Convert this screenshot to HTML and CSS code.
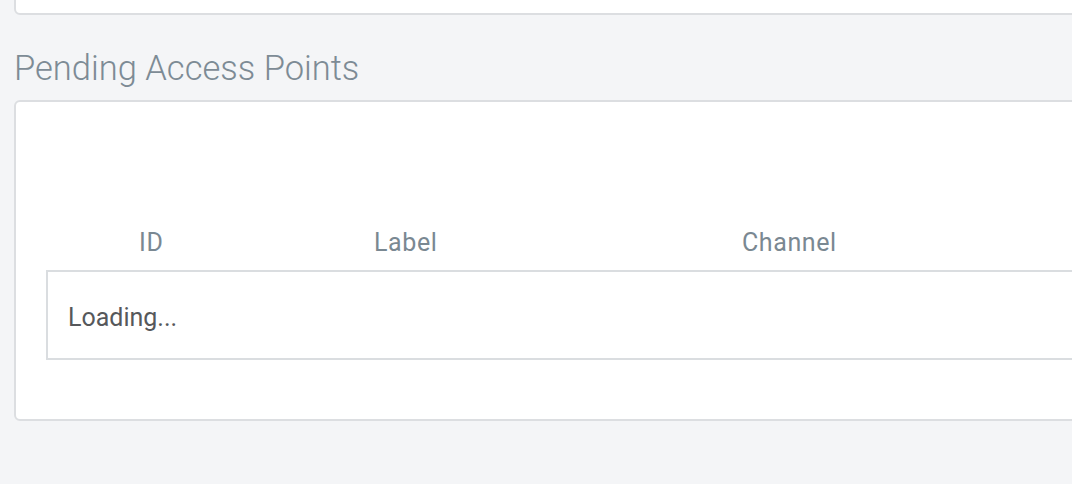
FILE: index.html
```html
<!DOCTYPE html>
<html>
<head>
<meta charset="utf-8">
<link rel="stylesheet" href="styles.css">
</head>
<body>
<div class="page">
  <div class="card card-top"></div>
  <h2 class="section-title">Pending Access Points</h2>
  <div class="card card-main">
    <div class="table-head">
      <div class="col col-id">ID</div>
      <div class="col col-label">Label</div>
      <div class="col col-channel">Channel</div>
    </div>
    <div class="table-body">
      <div class="loading">Loading...</div>
    </div>
  </div>
</div>
</body>
</html>
```
FILE: styles.css
```css
html, body {
  margin: 0;
  padding: 0;
  background: #f4f5f7;
  font-family: Roboto, "Liberation Sans", sans-serif;
}
.page {
  width: 1072px;
  height: 484px;
  overflow: hidden;
  padding-left: 14px;
  box-sizing: border-box;
}
.card {
  background: #fff;
  border: 2px solid #dcdee1;
  border-radius: 6px;
  width: 1120px;
  box-sizing: border-box;
}
.card-top {
  height: 40px;
  margin-top: -25px;
}
.section-title {
  margin: 31px 0 10px 0;
  font-size: 34.5px;
  line-height: 44px;
  font-weight: 300;
  color: #7d8b95;
}
.card-main {
  padding: 126px 0 59px 30px;
}
.table-head {
  display: flex;
  height: 30px;
  line-height: 30px;
  font-size: 25px;
  letter-spacing: 0.6px;
  color: #7a8892;
  padding-left: 93px;
  margin-bottom: 12px;
}
.col-id { width: 235px; }
.col-label { width: 368px; }
.table-body {
  border: 2px solid #dadde0;
  border-right: none;
  padding: 31px 20px 25px 20px;
}
.loading {
  font-size: 25px;
  line-height: 30px;
  color: #56585b;
}
```
